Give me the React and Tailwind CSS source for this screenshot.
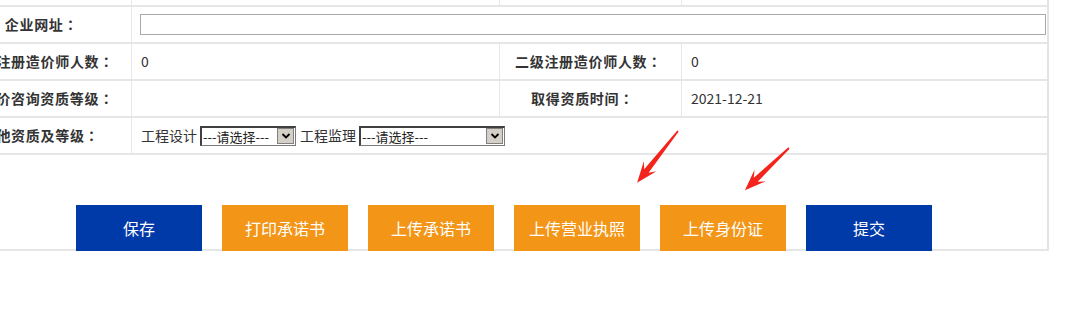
import React from 'react';

const font = { fontFamily: '"Microsoft YaHei", "Noto Sans CJK SC", "Liberation Sans", sans-serif' };

function Label({ children, className = '' }) {
    return (
        <div className={`w-[182px] shrink-0 flex items-center justify-center font-bold text-[14px] text-[#333] border-r border-[#e8e8e8] tracking-[0.7px] ${className}`}>
            {children}
            <span style={{ fontFamily: '"Noto Sans CJK JP", sans-serif' }}>：</span>
        </div>
    );
}

function Value({ children, className = '' }) {
    return (
        <div className={`flex items-center pl-[9px] text-[14px] text-[#333] ${className}`}>
            {children}
        </div>
    );
}

function FakeSelect({ width }) {
    return (
        <div
            className="h-[20px] flex items-center justify-between bg-white border border-[#7a7a7a] border-t-2 border-l-2 border-t-[#404040] border-l-[#404040]"
            style={{ width }}
        >
            <span className="text-[13px] leading-none text-[#222] pl-[1px]">---请选择---</span>
            <span className="w-[17px] h-[16px] mr-[1px] bg-[#d4d0c8] border border-[#808080] flex items-center justify-center">
                <svg width="10" height="8" viewBox="0 0 10 8">
                    <path d="M1.5 2 L5 5.5 L8.5 2" stroke="#000" strokeWidth="1.8" fill="none" />
                </svg>
            </span>
        </div>
    );
}

function Arrow({ x, y, length, angle }) {
    const L = length;
    const pts = [
        [0, -0.9],
        [L - 15, -2.8],
        [L - 21, -8],
        [L, 0],
        [L - 21, 8],
        [L - 15, 2.8],
        [0, 0.9],
    ].map((p) => p.join(',')).join(' ');
    return (
        <g transform={`translate(${x} ${y}) rotate(${angle})`}>
            <polygon points={pts} fill="#f4241c" />
        </g>
    );
}

export default function App() {
    const buttons = [
        { text: '保存', color: 'bg-[#0039a8]' },
        { text: '打印承诺书', color: 'bg-[#f39517]' },
        { text: '上传承诺书', color: 'bg-[#f39517]' },
        { text: '上传营业执照', color: 'bg-[#f39517]' },
        { text: '上传身份证', color: 'bg-[#f39517]' },
        { text: '提交', color: 'bg-[#0039a8]' },
    ];

    return (
        <div className="relative w-[1068px] h-[309px] bg-white overflow-hidden" style={font}>
            <div className="ml-[-50px] w-[1099px] border-r-2 border-[#e4e4e4]">
                {/* partial row at top */}
                <div className="h-[7px] flex border-b-2 border-[#e6e6e6]">
                    <div className="w-[182px] border-r border-[#e8e8e8]" />
                    <div className="w-[368px] border-r border-[#e8e8e8]" />
                    <div className="w-[182px] border-r border-[#e8e8e8]" />
                    <div className="flex-1" />
                </div>

                {/* 企业网址 */}
                <div className="h-[37px] flex border-b-2 border-[#e6e6e6]">
                    <Label className="pl-[2px]">企业网址</Label>
                    <div className="flex-1 flex items-center pl-[8px] pr-[1px]">
                        <div className="w-full h-[21px] border border-[#a9a9a9] bg-white" />
                    </div>
                </div>

                <div className="h-[37px] flex border-b-2 border-[#e6e6e6]">
                    <Label>一级注册造价师人数</Label>
                    <Value className="w-[368px] border-r border-[#e8e8e8]">0</Value>
                    <Label className="pr-[4px]">二级注册造价师人数</Label>
                    <Value className="flex-1">0</Value>
                </div>

                <div className="h-[37px] flex border-b-2 border-[#e6e6e6]">
                    <Label className="pr-[15px]">工程造价咨询资质等级</Label>
                    <Value className="w-[368px] border-r border-[#e8e8e8]" />
                    <Label className="pr-[16px]">取得资质时间</Label>
                    <Value className="flex-1">2021-12-21</Value>
                </div>

                <div className="h-[37px] flex border-b-2 border-[#e6e6e6]">
                    <Label>其他资质及等级</Label>
                    <div className="flex-1 flex items-center pl-[9px] text-[14px] text-[#333] gap-[3px]">
                        <span>工程设计</span>
                        <FakeSelect width={96} />
                        <span className="ml-[1px]">工程监理</span>
                        <FakeSelect width={146} />
                    </div>
                </div>

                {/* buttons */}
                <div className="h-[96px] flex items-end border-b-2 border-[#e6e6e6] pl-[126px]">
                    <div className="flex gap-[20px] mb-[-2px]">
                        {buttons.map((b) => (
                            <div
                                key={b.text}
                                className={`w-[126px] h-[46px] ${b.color} text-white text-[16px] flex items-center justify-center`}
                            >
                                {b.text}
                            </div>
                        ))}
                    </div>
                </div>
            </div>

            <svg className="absolute inset-0 pointer-events-none" width="1068" height="309">
                <Arrow x={678} y={131} length={66} angle={128.3} />
                <Arrow x={789} y={148} length={61} angle={136.3} />
            </svg>
        </div>
    );
}
